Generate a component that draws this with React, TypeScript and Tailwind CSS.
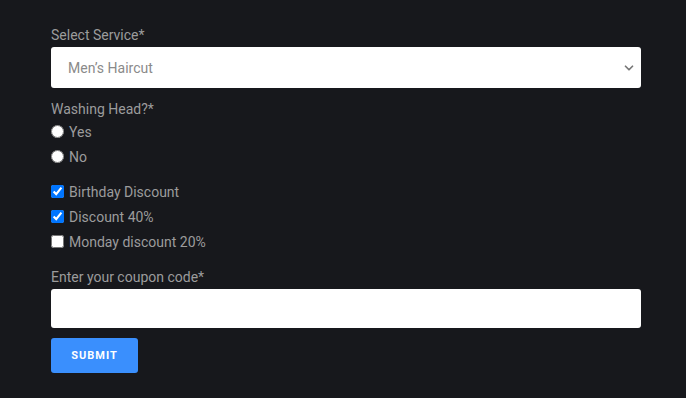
import { ChevronDown } from 'lucide-react';

function CheckRow({ label, checked }: { label: string; checked?: boolean }) {
  return (
    <label className="flex items-center gap-[5px] h-[25px]">
      <input type="checkbox" defaultChecked={checked} className="w-[13px] h-[13px] m-0 accent-[#0075ff]" />
      <span>{label}</span>
    </label>
  );
}

function RadioRow({ label }: { label: string }) {
  return (
    <label className="flex items-center gap-[5px] h-[25px]">
      <input type="radio" name="wash" className="w-[13px] h-[13px] m-0" />
      <span>{label}</span>
    </label>
  );
}

export default function App() {
  return (
    <div className="min-h-[398px] bg-[#17181c] text-[#9c9c9c] text-sm" style={{ fontFamily: 'Roboto, "Liberation Sans", sans-serif' }}>
      <div className="w-[590px] ml-[51px] pt-[26px]">
        <div className="mb-[3px] leading-[18px]">Select Service*</div>
        <div className="h-[41px] bg-white rounded-[3px] flex items-center justify-between pl-[17px] pr-[5px] text-[#8a8a8a]">
          <span>Men’s Haircut</span>
          <ChevronDown className="w-[14px] h-[14px] text-[#777]" strokeWidth={3} />
        </div>
        <div className="mt-[12px] leading-[18px]">Washing Head?*</div>
        <div className="mt-[1px]">
          <RadioRow label="Yes" />
          <RadioRow label="No" />
        </div>
        <div className="mt-[10px]">
          <CheckRow label="Birthday Discount" checked />
          <CheckRow label="Discount 40%" checked />
          <CheckRow label="Monday discount 20%" />
        </div>
        <div className="mt-[14px] mb-[3px] leading-[18px]">Enter your coupon code*</div>
        <input type="text" className="block w-full h-[39px] bg-white rounded-[3px] outline-none" />
        <button className="mt-[10px] w-[87px] h-[35px] bg-[#3a8ffd] rounded-[3px] text-white text-[11px] font-bold tracking-[1px]">
          SUBMIT
        </button>
      </div>
    </div>
  );
}
